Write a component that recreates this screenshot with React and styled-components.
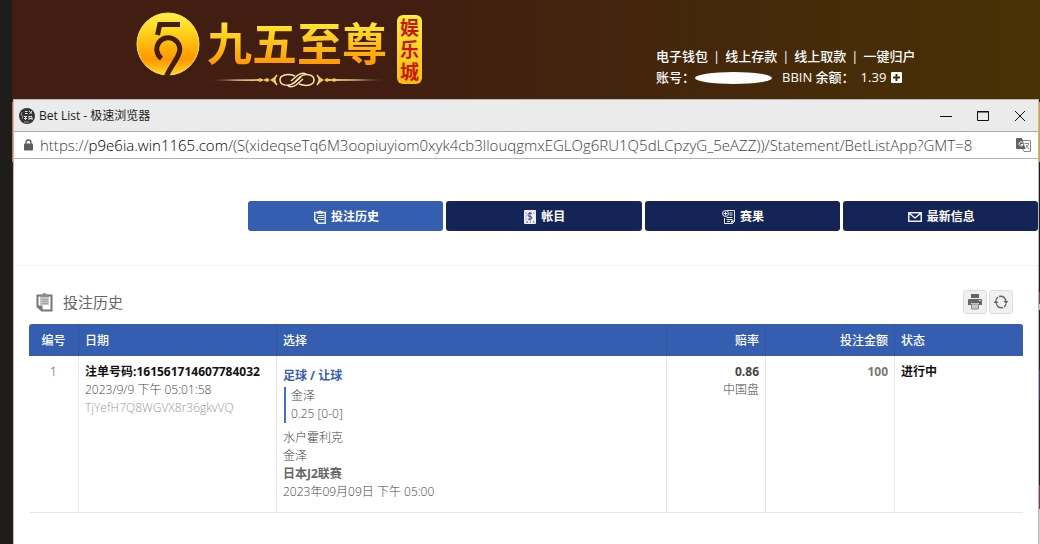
import React from 'react';
import styled, { createGlobalStyle } from 'styled-components';

const BLUE = '#355eb1';
const NAVY = '#152456';
const LINE = '#e6e6e6';
const FONT = '"Open Sans", "Noto Sans CJK SC", sans-serif';

const GlobalStyle = createGlobalStyle`
    * {
        box-sizing: border-box;
    }
    body {
        margin: 0;
        background: #1f1c1c;
        font-family: ${FONT};
        font-size: 12px;
        line-height: 18px;
        color: #444;
    }
    button {
        font: inherit;
        border: 0;
        padding: 0;
        cursor: pointer;
    }
    svg {
        display: block;
        flex: none;
    }
`;

const Page = styled.div`
    display: flex;
    flex-direction: column;
    min-height: 100vh;
    padding-left: 12px;
`;

const Header = styled.header`
    display: flex;
    height: 99px;
    padding-left: 124px;
    background: linear-gradient(90deg, #411e11 0%, #411e11 38%, #493205 100%);
`;

const Logo = styled.div`
    display: flex;
    flex: none;
    width: 520px;
    padding-top: 12px;
`;

const Brand = styled.div`
    display: flex;
    flex-direction: column;
    align-items: flex-end;
    margin-left: 7px;
`;

const BrandName = styled.div`
    padding-top: 4px;
    font-size: 45px;
    font-weight: 700;
    line-height: 56px;
    background: linear-gradient(180deg, #ffe62a 20%, #ff9a05 85%);
    -webkit-background-clip: text;
    background-clip: text;
    color: transparent;
`;

const BrandTag = styled.div`
    width: 25px;
    height: 69px;
    margin: 3px 0 0 10px;
    padding: 2px 3px;
    border-radius: 6px;
    background: linear-gradient(180deg, #fff03a, #fdb813);
    color: #c8160c;
    font-size: 19px;
    font-weight: 700;
    line-height: 22px;
`;

const Account = styled.div`
    padding-top: 46px;
    color: #fff;
    font-size: 13px;
    font-weight: 500;
    line-height: 21px;
    white-space: nowrap;
`;

const AccountLinks = styled.nav`
    display: flex;
    gap: 5px;

    a {
        color: inherit;
        text-decoration: none;
    }
`;

const AccountRow = styled.div`
    display: flex;
    align-items: center;
`;

const Masked = styled.span`
    width: 77px;
    height: 12px;
    margin-right: 10px;
    border-radius: 50%;
    background: #fff;
`;

const Balance = styled.span`
    margin: 0 5px 0 6px;
`;

const PlusButton = styled.button`
    background: none;
`;

/* the sliver of the page that shows on both sides of the popup */
const Backdrop = styled.div`
    display: flex;
    flex: 1;
    padding: 0 1px;
    background:
        linear-gradient(#e2683a, #e2683a) left 3px / 1px 60px no-repeat,
        linear-gradient(#d9a520, #d9a520) right 3px / 1px 60px no-repeat,
        linear-gradient(#1f1c1c 0 193px, #8b3b3f 193px 205px, #c8c0c0 205px 211px, #201c22 211px 270px, #3b3563 270px 301px, #202025 301px 386px, #8b3b3f 386px 410px, #cfd0d6 410px) right / 1px 100% no-repeat,
        #3a2018;
`;

const Popup = styled.div`
    flex: 1;
    min-width: 0;
    background: #fff;
    border: solid #b9b9b9;
    border-width: 1px 1px 0;
`;

const TitleBar = styled.div`
    display: flex;
    align-items: center;
    height: 32px;
    padding: 0 12px 0 5px;
    background: #ebebeb;
    border-bottom: 1px solid #acacac;
    color: #1b1b1b;
`;

const WindowTitle = styled.h1`
    flex: 1;
    margin: 0 0 0 4px;
    font-size: 12px;
    font-weight: 400;
`;

const WindowButtons = styled.div`
    display: flex;
    gap: 24px;

    button {
        background: none;
        color: #111;
    }
`;

const AddressBar = styled.div`
    display: flex;
    align-items: center;
    height: 27px;
    padding: 0 7px 0 10px;
    border-bottom: 1px solid #b4b4b4;
    color: #3c3c3c;
`;

const Url = styled.div`
    flex: 1;
    margin-left: 7px;
    font-size: 15px;
    font-weight: 300;
    line-height: 20px;
    white-space: nowrap;

    span {
        color: #000;
    }
`;

const Nav = styled.nav`
    display: flex;
    gap: 3px;
    padding: 42px 0 34px 234px;
    border-bottom: 1px solid #f4f4f4;
`;

const Tab = styled.button`
    display: flex;
    flex: 1;
    align-items: center;
    justify-content: center;
    gap: 5px;
    height: 30px;
    padding: 2px 0 0 2px;
    border-radius: 3px;
    background: ${({ $active }) => ($active ? BLUE : NAVY)};
    color: #fff;
    font-weight: 700;
`;

const Panel = styled.main`
    padding: 24px 15px 0;
`;

const PanelHead = styled.div`
    display: flex;
    align-items: center;
    height: 24px;
    margin-bottom: 10px;
    padding: 0 10px 0 7px;
`;

const PanelTitle = styled.h2`
    flex: 1;
    margin: 0 0 0 10px;
    color: #666;
    font-size: 15px;
    font-weight: 400;
    line-height: 24px;
`;

const ToolButton = styled.button`
    display: flex;
    align-items: center;
    justify-content: center;
    width: 24px;
    height: 24px;
    margin-left: 2px;
    border: 1px solid #dcdcdc;
    border-radius: 3px;
    background: #f1f1f1;
    color: #666;
`;

const Table = styled.table`
    width: 100%;
    table-layout: fixed;
    border-collapse: separate;
    border-spacing: 0;
`;

const Th = styled.th`
    width: ${({ $width }) => ($width ? `${$width}px` : 'auto')};
    height: 32px;
    padding: 2px 6px 0;
    background: ${BLUE};
    border-right: 1px solid #2f55a3;
    color: #fff;
    font-weight: 500;
    text-align: ${({ $align }) => $align || 'left'};

    &:first-child {
        border-top-left-radius: 3px;
    }
    &:last-child {
        border-right: 0;
        border-top-right-radius: 3px;
    }
`;

const Td = styled.td`
    padding: ${({ $roomy }) => ($roomy ? '11px 6px' : '7px 6px')};
    border-right: 1px solid ${LINE};
    border-bottom: 1px solid ${LINE};
    font-weight: 300;
    text-align: ${({ $align }) => $align || 'left'};
    vertical-align: top;
    white-space: nowrap;

    &:last-child {
        border-right: 0;
    }
`;

const Line = styled.div`
    color: ${({ $color }) => $color || 'inherit'};
    font-weight: ${({ $bold }) => ($bold ? 700 : 300)};
`;

const Pick = styled.div`
    margin: 2px 0 6px 1px;
    padding-left: 5px;
    border-left: 2px solid #3f6fcf;
`;

const Emblem = () => (
    <svg width="64" height="64" viewBox="0 0 64 64" aria-hidden="true">
        <defs>
            <linearGradient id="gold" x1="0" y1="0" x2="0" y2="1">
                <stop offset="0" stopColor="#fff04a" />
                <stop offset=".3" stopColor="#ffd31c" />
                <stop offset=".75" stopColor="#ff9700" />
                <stop offset="1" stopColor="#ffd82a" />
            </linearGradient>
        </defs>
        <circle cx="32" cy="32" r="31" fill="url(#gold)" stroke="#f6e652" />
        <g fill="none" stroke="#411e11" strokeWidth="5">
            <path d="M44 12.500H23.800L21.500 23" />
            <path d="M25.500 46.500A11.500 11.500 0 1 1 42.500 42.500C40 49 35 54 30.500 64" />
        </g>
    </svg>
);

const Ornament = () => (
    <svg width="180" height="16" viewBox="0 0 180 16" aria-hidden="true">
        <defs>
            <linearGradient id="fadeIn">
                <stop offset="0" stopColor="#f3cf7b" stopOpacity="0" />
                <stop offset=".5" stopColor="#fff0c0" />
                <stop offset="1" stopColor="#f0c040" />
            </linearGradient>
            <linearGradient id="fadeOut">
                <stop offset="0" stopColor="#f0c040" />
                <stop offset=".5" stopColor="#fff0c0" />
                <stop offset="1" stopColor="#f3cf7b" stopOpacity="0" />
            </linearGradient>
        </defs>
        <path d="M0 8L56 7V9Z" fill="url(#fadeIn)" />
        <path d="M122 7L180 8L122 9Z" fill="url(#fadeOut)" />
        <path d="M49 8l4-2 3 2 4-2 3 2 6-4-2 4 2 4-6-4-3 2-4-2-3 2zM131 8l-4-2-3 2-4-2-3 2-6-4 2 4-2 4 6-4 3 2 4-2 3 2z" fill="#f3c945" />
        <g fill="none" stroke="#f8e6a8" strokeWidth="1.500">
            <path d="M70 3C67 6 67 10 70 13M110 3C113 6 113 10 110 13" />
            <path d="M88 4C80 1 73 3 73 8C73 14 83 15 88 10L93 5C97 1 107 2 107 8C107 13 100 15 92 12" />
            <path d="M84 9L91 3C94 1 97 1 99 2M96 7L89 13C86 15 83 15 81 14M87 11L94 5" />
        </g>
    </svg>
);

const SiteIcon = () => (
    <svg width="16" height="16" viewBox="0 0 16 16" aria-hidden="true">
        <circle cx="8" cy="8" r="8" fill="#343434" />
        <path d="M6 3.500h2.500M6 5.500h2.500M10 3l3 2.500M13 3l-2.500 3M5 8.500h3M5 10.500h3M6.500 8v4M10 8.500h3M10 12V8M13 12V9M10 10.500h3" fill="none" stroke="#e2e2e2" />
        <path d="M3 4l-1 3 2 1-1 3M5 14h5" fill="none" stroke="#8d8d8d" />
    </svg>
);

const LockIcon = () => (
    <svg width="9" height="12" viewBox="0 0 9 12" aria-hidden="true">
        <rect y="4.500" width="9" height="7" rx="1" fill="#5d5d5d" />
        <path d="M2 5V3.500a2.500 2.500 0 0 1 5 0V5" fill="none" stroke="#5d5d5d" strokeWidth="1.300" />
    </svg>
);

const TranslateIcon = () => (
    <svg width="15" height="14" viewBox="0 0 15 14" aria-hidden="true">
        <path d="M6 2.500h8.500v11H8L6 10" fill="#fff" stroke="#8a8a8a" />
        <path d="M0 1q0-1 1-1h5l3.500 11H1q-1 0-1-1z" fill="#5f6266" />
        <path d="M6.500 4.500A2 2 0 1 0 7 6.500H5" fill="none" stroke="#fff" />
        <path d="M8.500 5.500H13M11 4.500v1M12.500 6Q12 9 9.500 10M10 7l3 4" fill="none" stroke="#8a8a8a" />
    </svg>
);

const ClipboardIcon = () => (
    <svg width="12" height="14" viewBox="0 0 12 14" aria-hidden="true">
        <path d="M.75 2.500h10.500v10.750H4L.75 10z" fill="none" stroke="#e4ecff" strokeWidth="1.500" />
        <path d="M3 3.500V1.500h1.500Q6-.5 7.500 1.500H9v2z" fill="#fff" />
        <path d="M4 5.500h6M3 7.500h7M5 9.500h5" stroke="#e4ecff" />
        <path d="M.5 9.500H4V13z" fill="#fff" />
    </svg>
);

const HistoryIcon = () => (
    <svg width="17" height="20" viewBox="0 0 17 20" aria-hidden="true">
        <path d="M1.500 3.500h14v15H6l-4.500-4z" fill="#fff" stroke="#777" strokeWidth="2" />
        <path d="M4 5h9v8H4z" fill="#c4c4c4" />
        <path d="M4.500 5V2.500h2Q8.500-1 10.500 2.500h2V5z" fill="#8c8c8c" />
        <path d="M6 7.500h6M6 9.500h6M6 11.500h6" stroke="#a2a2a2" />
        <path d="M1 13.500h5.500v5.500z" fill="#777" />
    </svg>
);

const LedgerIcon = () => (
    <svg width="12" height="14" viewBox="0 0 12 14" aria-hidden="true">
        <rect width="12" height="14" rx="1" fill="#eef1fb" />
        <path d="M8 3.500Q4 2 4 4.500T6 6.500T8 8.500Q7 10 4 9M6 2v8.500" fill="none" stroke="#43448a" />
        <path d="M1.500 3h1M1.500 6h1M1.500 9h1M2 12h2M6 12h1M9 12h1.500M9.500 3h1" stroke="#43448a" />
    </svg>
);

const ResultIcon = () => (
    <svg width="13" height="14" viewBox="0 0 13 14" aria-hidden="true">
        <path d="M5 .5h7.500v11l-2 2H2.500V8" fill="none" stroke="#e8ecf8" />
        <circle cx="3.500" cy="3.500" r="3" fill="#152456" stroke="#e8ecf8" />
        <path d="M3.500 1.500v4M1.500 3.500h4M7.500 3h3M7.500 5h3M4.500 7.500h6M4.500 9.500h6M5 11.500h3" stroke="#e8ecf8" />
        <path d="M9 10.500h3.500l-3 3z" fill="#fff" />
    </svg>
);

const MailIcon = () => (
    <svg width="14" height="10" viewBox="0 0 14 10" aria-hidden="true">
        <path d="M.75.750h12.500v8.500H.75zM1 1l6 5 6-5" fill="none" stroke="#e8ecf8" strokeWidth="1.500" />
    </svg>
);

const PrintIcon = () => (
    <svg width="14" height="16" viewBox="0 0 14 16" aria-hidden="true">
        <path d="M3 0h8v4H3z" fill="#666" />
        <path d="M1 5h12q1 0 1 1v5h-3V9H3v2H0V6q0-1 1-1z" fill="#666" />
        <path d="M3.500 10h7v5h-7z" fill="#c9c9ce" stroke="#8a8a96" />
        <path d="M11 6.500h1.500" stroke="#fff" />
    </svg>
);

const RefreshIcon = () => (
    <svg width="16" height="14" viewBox="0 0 16 14" aria-hidden="true">
        <path d="M6 1.500Q12 0 13 7M10 12.500Q4 14 3 7M3 5Q3.500 3 5 2M13 9Q12.500 11 11 12" fill="none" stroke="#666" strokeWidth="1.300" />
        <path d="M10.500 6h5L13 9zM.5 8h5L3 5z" fill="#666" />
    </svg>
);

const TABS = [
    { label: '投注历史', icon: <ClipboardIcon />, active: true },
    { label: '帐目', icon: <LedgerIcon /> },
    { label: '赛果', icon: <ResultIcon /> },
    { label: '最新信息', icon: <MailIcon /> },
];

const COLUMNS = [
    { label: '编号', width: 50, align: 'center' },
    { label: '日期', width: 198 },
    { label: '选择' },
    { label: '赔率', width: 99, align: 'right' },
    { label: '投注金额', width: 129, align: 'right' },
    { label: '状态', width: 128 },
];

const SiteHeader = () => (
    <Header>
        <Logo>
            <Emblem />
            <Brand>
                <BrandName>九五至尊</BrandName>
                <Ornament />
            </Brand>
            <BrandTag>娱乐城</BrandTag>
        </Logo>
        <Account>
            <AccountLinks>
                <a href="#wallet">电子钱包</a>|
                <a href="#deposit">线上存款</a>|
                <a href="#withdraw">线上取款</a>|
                <a href="#collect">一键归户</a>
            </AccountLinks>
            <AccountRow>
                账号：<Masked />BBIN 余额：
                <Balance>1.39</Balance>
                <PlusButton aria-label="展开">
                    <svg width="11" height="11" viewBox="0 0 11 11">
                        <rect width="11" height="11" rx="1" fill="#fff" />
                        <path d="M5.500 2v7M2 5.500h7" stroke="#463009" strokeWidth="2" />
                    </svg>
                </PlusButton>
            </AccountRow>
        </Account>
    </Header>
);

const App = () => {
    return (
        <Page>
            <GlobalStyle />
            <SiteHeader />
            <Backdrop>
                <Popup>
                    <TitleBar>
                        <SiteIcon />
                        <WindowTitle>Bet List - 极速浏览器</WindowTitle>
                        <WindowButtons>
                            <button aria-label="最小化">
                                <svg width="13" height="12"><path d="M0 6.500h12" stroke="currentColor" /></svg>
                            </button>
                            <button aria-label="最大化">
                                <svg width="13" height="12"><path d="M.5 1.500h11v9H.5zM0 2h12" fill="none" stroke="currentColor" /></svg>
                            </button>
                            <button aria-label="关闭">
                                <svg width="12" height="12"><path d="M1 1l10 10M11 1L1 11" stroke="currentColor" /></svg>
                            </button>
                        </WindowButtons>
                    </TitleBar>
                    <AddressBar>
                        <LockIcon />
                        <Url>
                            https://<span>p9e6ia.win1165.com</span>/(S(xideqseTq6M3oopiuyiom0xyk4cb3llouqgmxEGLOg6RU1Q5dLCpzyG_5eAZZ))/Statement/BetListApp?GMT=8
                        </Url>
                        <TranslateIcon />
                    </AddressBar>
                    <Nav>
                        {TABS.map(({ label, icon, active }) => (
                            <Tab key={label} $active={active}>
                                {icon}
                                {label}
                            </Tab>
                        ))}
                    </Nav>
                    <Panel>
                        <PanelHead>
                            <HistoryIcon />
                            <PanelTitle>投注历史</PanelTitle>
                            <ToolButton aria-label="打印"><PrintIcon /></ToolButton>
                            <ToolButton aria-label="刷新"><RefreshIcon /></ToolButton>
                        </PanelHead>
                        <Table>
                            <thead>
                                <tr>
                                    {COLUMNS.map(({ label, width, align }) => (
                                        <Th key={label} $width={width} $align={align}>{label}</Th>
                                    ))}
                                </tr>
                            </thead>
                            <tbody>
                                <tr>
                                    <Td $align="center">1</Td>
                                    <Td>
                                        <Line $bold $color="#111">注单号码:161561714607784032</Line>
                                        <Line>2023/9/9 下午 05:01:58</Line>
                                        <Line $color="#999">TjYefH7Q8WGVX8r36gkvVQ</Line>
                                    </Td>
                                    <Td $roomy>
                                        <Line $bold $color={BLUE}>足球 / 让球</Line>
                                        <Pick>
                                            <Line>金泽</Line>
                                            <Line>0.25 [0-0]</Line>
                                        </Pick>
                                        <Line>水户霍利克</Line>
                                        <Line>金泽</Line>
                                        <Line $bold $color="#666">日本J2联赛</Line>
                                        <Line>2023年09月09日 下午 05:00</Line>
                                    </Td>
                                    <Td $align="right">
                                        <Line $bold>0.86</Line>
                                        <Line>中国盘</Line>
                                    </Td>
                                    <Td $align="right"><Line $bold $color="#777">100</Line></Td>
                                    <Td><Line $bold $color="#111">进行中</Line></Td>
                                </tr>
                            </tbody>
                        </Table>
                    </Panel>
                </Popup>
            </Backdrop>
        </Page>
    );
};

export default App;
